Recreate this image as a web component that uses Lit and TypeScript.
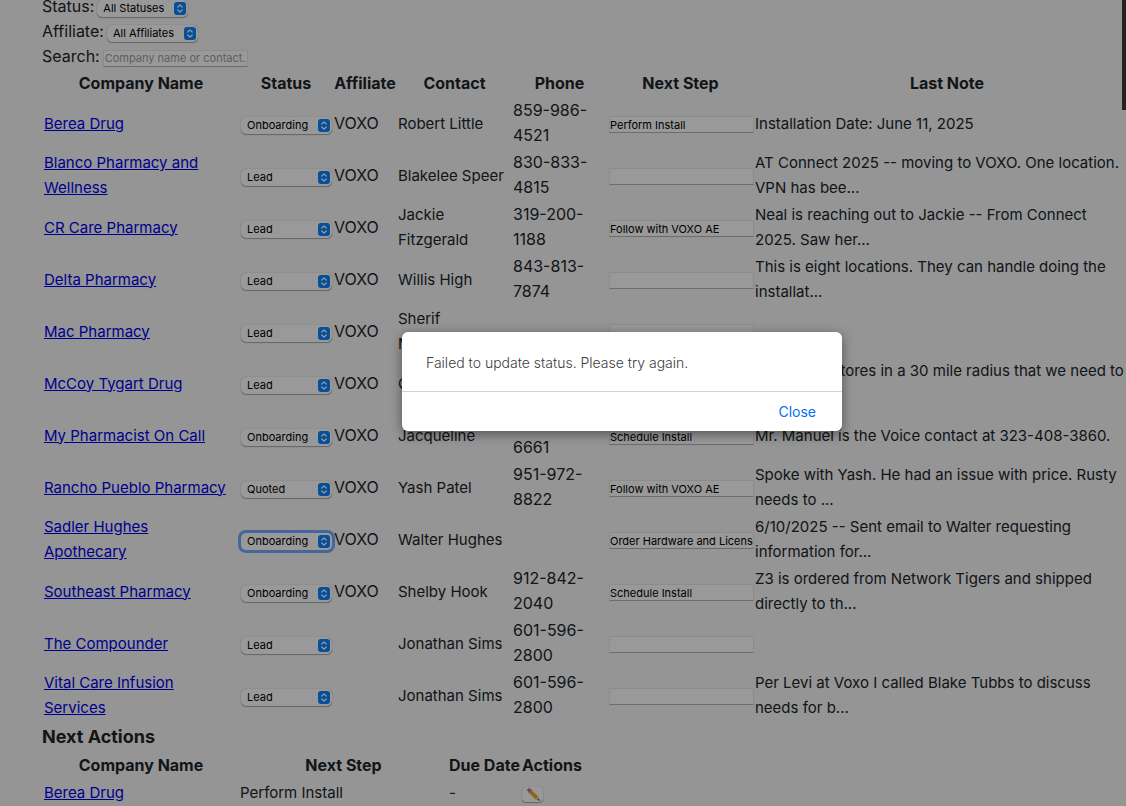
import { LitElement, html, css } from "lit";
import { customElement, property } from "lit/decorators.js";

interface Company {
  name: string;
  status: string;
  affiliate: string;
  contact: string;
  phone: string;
  step: string;
  note: string;
}

const COMPANIES: Company[] = [
  { name: "Berea Drug", status: "Onboarding", affiliate: "VOXO", contact: "Robert Little", phone: "859-986-4521", step: "Perform Install", note: "Installation Date: June 11, 2025" },
  { name: "Blanco Pharmacy and Wellness", status: "Lead", affiliate: "VOXO", contact: "Blakelee Speer", phone: "830-833-4815", step: "", note: "AT Connect 2025 -- moving to VOXO. One location. VPN has bee..." },
  { name: "CR Care Pharmacy", status: "Lead", affiliate: "VOXO", contact: "Jackie Fitzgerald", phone: "319-200-1188", step: "Follow with VOXO AE", note: "Neal is reaching out to Jackie -- From Connect 2025. Saw her..." },
  { name: "Delta Pharmacy", status: "Lead", affiliate: "VOXO", contact: "Willis High", phone: "843-813-7874", step: "", note: "This is eight locations. They can handle doing the installat..." },
  { name: "Mac Pharmacy", status: "Lead", affiliate: "VOXO", contact: "Sherif Mohammed", phone: "", step: "", note: "" },
  { name: "McCoy Tygart Drug", status: "Lead", affiliate: "VOXO", contact: "Chris", phone: "", step: "", note: "He has six stores in a 30 mile radius that we need to add..." },
  { name: "My Pharmacist On Call", status: "Onboarding", affiliate: "VOXO", contact: "Jacqueline", phone: "323-408-6661", step: "Schedule Install", note: "Mr. Manuel is the Voice contact at 323-408-3860." },
  { name: "Rancho Pueblo Pharmacy", status: "Quoted", affiliate: "VOXO", contact: "Yash Patel", phone: "951-972-8822", step: "Follow with VOXO AE", note: "Spoke with Yash. He had an issue with price. Rusty needs to ..." },
  { name: "Sadler Hughes Apothecary", status: "Onboarding", affiliate: "VOXO", contact: "Walter Hughes", phone: "", step: "Order Hardware and Licenses", note: "6/10/2025 -- Sent email to Walter requesting information for..." },
  { name: "Southeast Pharmacy", status: "Onboarding", affiliate: "VOXO", contact: "Shelby Hook", phone: "912-842-2040", step: "Schedule Install", note: "Z3 is ordered from Network Tigers and shipped directly to th..." },
  { name: "The Compounder", status: "Lead", affiliate: "", contact: "Jonathan Sims", phone: "601-596-2800", step: "", note: "" },
  { name: "Vital Care Infusion Services", status: "Lead", affiliate: "", contact: "Jonathan Sims", phone: "601-596-2800", step: "", note: "Per Levi at Voxo I called Blake Tubbs to discuss needs for b..." },
];

@customElement("pop-select")
class PopSelect extends LitElement {
  @property() value = "";
  @property() label = "";
  @property({ type: Boolean, reflect: true }) active = false;

  static styles = css`
    :host { display: block; position: relative; width: 91px; height: 17px; line-height: 17px; }
    select {
      appearance: none; display: block; box-sizing: border-box; width: 100%; height: 17px; margin: 0;
      padding: 0 20px 0 6px; border: 0; border-radius: 5px; background: #fff; color: #000;
      font: 11px/17px Inter, "Liberation Sans", sans-serif; outline: none;
      box-shadow: 0 0 1px rgba(0, 0, 0, 0.35), 0 1px 1px rgba(0, 0, 0, 0.3);
    }
    :host([active]) select { box-shadow: 0 0 0 3px #74abff; }
    svg { position: absolute; right: 2px; top: 2px; width: 12px; height: 13px; pointer-events: none; }
  `;

  render() {
    return html`
      <select aria-label=${this.label}><option selected>${this.value}</option></select>
      <svg viewBox="0 0 12 13" aria-hidden="true">
        <rect width="12" height="13" rx="3" fill="#0a84ff" />
        <path d="M3.8 5 6 2.9 8.2 5M3.8 8 6 10.1 8.2 8" fill="none" stroke="#fff" stroke-width="1.3" stroke-linecap="round" stroke-linejoin="round" />
      </svg>
    `;
  }
}

@customElement("app-root")
class AppRoot extends LitElement {
  static styles = css`
    :host {
      display: block; position: relative; height: 100vh; overflow: hidden; background: #f8f8f8;
      color: #212529; font: 16px/25px Inter, "Liberation Sans", sans-serif;
    }
    main { padding: 0 0 0 42px; margin-top: -6px; }
    .filter { display: flex; align-items: center; height: 25px; gap: 3px; }
    .filter pop-select { margin-top: 4px; }
    .field {
      display: block; box-sizing: border-box; width: 145px; height: 17px; margin: 0; padding: 0;
      border: 1px solid #e9e9e9; border-bottom-color: #b4b4b4; background: #fff; color: #000; border-radius: 0;
      font: 11px/15px Inter, "Liberation Sans", sans-serif;
    }
    .filter .field { margin-top: 3px; padding: 0 1px; }
    .field::placeholder { color: #a0a0a0; opacity: 1; }
    td .field { margin: 3px 0 0 1px; }
    td pop-select { margin: 4px 0 0 1px; }
    table { table-layout: fixed; border-collapse: separate; border-spacing: 2px; }
    .companies { width: 1099px; }
    .actions { width: 540px; }
    th, td { padding: 0; text-align: left; vertical-align: middle; }
    th { text-align: center; font-weight: 700; white-space: nowrap; }
    td { font-size: 15px; }
    td.wide { font-size: 16px; }
    td.name { padding-right: 6px; }
    td.note { padding-right: 12px; }
    .companies td { height: 50px; }
    .c-name { width: 194px; }
    .c-status { width: 92px; }
    .c-aff { width: 62px; }
    .c-contact { width: 113px; }
    .c-phone { width: 93px; }
    .c-step { width: 145px; }
    .a-step { width: 207px; }
    .a-due { width: 71px; }
    .a-act { width: 58px; }
    a { color: #0000ee; text-decoration: underline; }
    h2 { margin: 0; font-size: 18px; line-height: 29px; font-weight: 700; }
    .edit {
      display: block; width: 21px; height: 15px; margin-top: 3px; padding: 0; border: 0; border-radius: 4px; background: #fff;
      box-shadow: 0 0 1px rgba(0, 0, 0, 0.35), 0 1px 1px rgba(0, 0, 0, 0.3);
    }
    .edit svg { display: block; width: 14px; height: 14px; margin: auto; }
    .edge { position: absolute; top: 0; right: 0; width: 4px; height: 110px; background: #222; z-index: 3; }
    .scrim {
      position: absolute; inset: 0; z-index: 2; display: flex; align-items: center; justify-content: center;
      padding: 0 0 43px 118px; background: rgba(0, 0, 0, 0.4);
    }
    .dialog {
      width: 440px; border-radius: 6px; background: #fff; font-size: 14px; line-height: 19px;
      box-shadow: 0 3px 12px rgba(0, 0, 0, 0.45);
    }
    .dialog p { margin: 0; padding: 21px 24px 19px; color: #3c3c3c; font-weight: 300; }
    .dialog footer { display: flex; justify-content: flex-end; padding: 10px 26px; border-top: 1px solid #d2d2d2; }
    .dialog button { padding: 0; border: 0; background: none; color: #0070f5; font: inherit; font-weight: 400; }
  `;

  private row(c: Company) {
    return html`<tr>
      <td class="name"><a href="#">${c.name}</a></td>
      <td><pop-select .value=${c.status} .label=${"Status of " + c.name} ?active=${c.name.startsWith("Sadler")}></pop-select></td>
      <td class="wide">${c.affiliate}</td>
      <td>${c.contact}</td>
      <td class="wide">${c.phone}</td>
      <td><input class="field" aria-label=${"Next step for " + c.name} .value=${c.step} /></td>
      <td class="note">${c.note}</td>
    </tr>`;
  }

  render() {
    return html`
      <main>
        <div class="filter"><span>Status:</span><pop-select .value=${"All Statuses"} .label=${"Status"}></pop-select></div>
        <div class="filter"><span>Affiliate:</span><pop-select .value=${"All Affiliates"} .label=${"Affiliate"}></pop-select></div>
        <div class="filter"><label for="search">Search:</label><input id="search" class="field" placeholder="Company name or contact..." /></div>
        <table class="companies">
          <colgroup>
            <col class="c-name" /><col class="c-status" /><col class="c-aff" /><col class="c-contact" />
            <col class="c-phone" /><col class="c-step" /><col />
          </colgroup>
          <thead>
            <tr><th>Company Name</th><th>Status</th><th>Affiliate</th><th>Contact</th><th>Phone</th><th>Next Step</th><th>Last Note</th></tr>
          </thead>
          <tbody>${COMPANIES.map((c) => this.row(c))}</tbody>
        </table>
        <h2>Next Actions</h2>
        <table class="actions">
          <colgroup><col class="c-name" /><col class="a-step" /><col class="a-due" /><col class="a-act" /></colgroup>
          <thead><tr><th>Company Name</th><th>Next Step</th><th>Due Date</th><th>Actions</th></tr></thead>
          <tbody>
            <tr>
              <td><a href="#">Berea Drug</a></td>
              <td>Perform Install</td>
              <td>-</td>
              <td>
                <button class="edit" aria-label="Edit">
                  <svg viewBox="0 0 14 14" aria-hidden="true">
                    <path d="M3 1.2 1.2 3 2.6 4.4 4.4 2.6z" fill="#ee6a80" stroke="#ee6a80" stroke-linejoin="round" />
                    <path d="M4.8 1.8 1.8 4.8 3.2 6.2 6.2 3.2z" fill="#8a959d" />
                    <path d="M6.2 3.2 3.2 6.2 9.4 12.4 12.4 9.4z" fill="#f7b52c" />
                    <path d="M4.6 4.6 10.8 10.8" stroke="#d98e1c" stroke-width="1" />
                    <path d="M12.4 9.4 9.4 12.4 13.6 13.6z" fill="#e8c79a" />
                    <path d="M12.9 11.6 11.6 12.9 13.7 13.7z" fill="#333" />
                  </svg>
                </button>
              </td>
            </tr>
          </tbody>
        </table>
      </main>
      <div class="scrim">
        <div class="dialog" role="alertdialog" aria-modal="true" aria-labelledby="msg">
          <p id="msg">Failed to update status. Please try again.</p>
          <footer><button>Close</button></footer>
        </div>
      </div>
      <div class="edge"></div>
    `;
  }
}
